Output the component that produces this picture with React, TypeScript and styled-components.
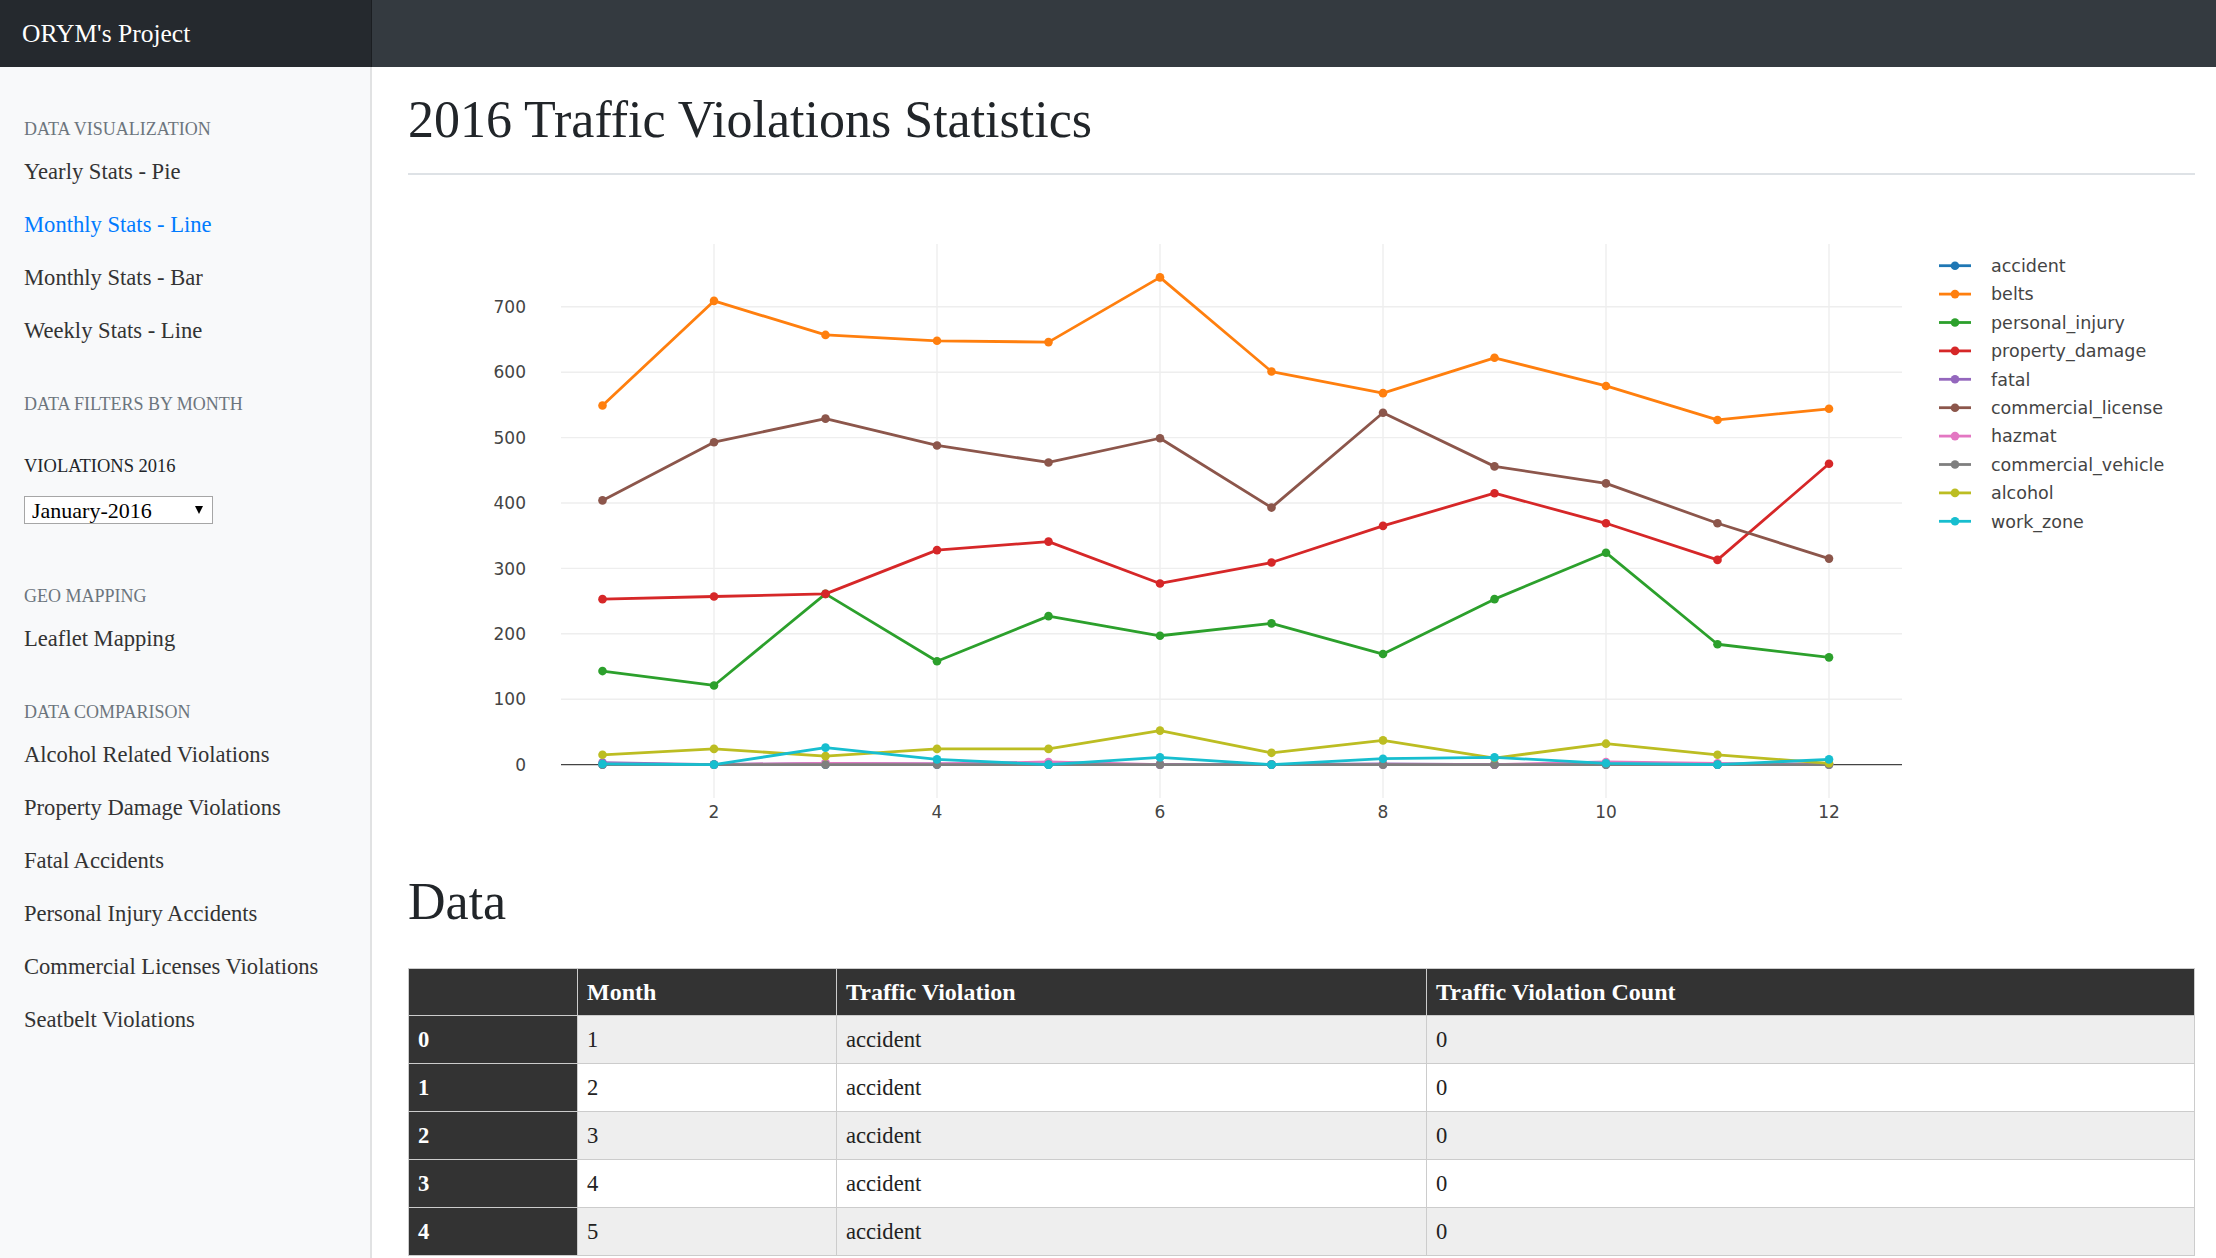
import React from "react";
import styled, { createGlobalStyle } from "styled-components";

const GlobalStyle = createGlobalStyle`
  * { box-sizing: border-box; }
  html, body { margin: 0; padding: 0; background: #fff; }
  body {
    font-family: "Liberation Serif", "Times New Roman", serif;
    color: #212529;
  }
`;

const Navbar = styled.header`
  display: flex;
  height: 67px;
  background: #343a40;
`;

const Brand = styled.div`
  width: 372px;
  flex: none;
  display: flex;
  align-items: center;
  padding-left: 22px;
  background: rgba(0, 0, 0, 0.28);
  box-shadow: inset -1px 0 0 rgba(0, 0, 0, 0.25);
  color: #fff;
  font-size: 25.5px;
`;

const Layout = styled.div`
  display: flex;
  align-items: stretch;
  min-height: 1191px;
`;

const Sidebar = styled.nav`
  width: 372px;
  flex: none;
  background: #f8f9fa;
  box-shadow: inset -2px 0 0 rgba(0, 0, 0, 0.09);
  padding-top: 50px;
`;

const SideHeading = styled.div<{ $mt?: number }>`
  margin-top: ${(p) => p.$mt ?? 0}px;
  margin-bottom: 4px;
  padding: 0 24px;
  font-size: 18px;
  line-height: 24px;
  color: #6c757d;
  text-transform: uppercase;
`;

const NavItem = styled.a<{ $active?: boolean }>`
  display: block;
  padding: 0 24px;
  font-size: 22.6px;
  line-height: 53px;
  height: 53px;
  color: ${(p) => (p.$active ? "#007bff" : "#333")};
  text-decoration: none;
  white-space: nowrap;
`;

const FilterLabel = styled.div`
  margin-top: 38px;
  padding: 0 24px;
  font-size: 18.5px;
  line-height: 24px;
  color: #212529;
`;

const SelectWrap = styled.div`
  position: relative;
  margin: 18px 0 0 24px;
  width: 189px;
  height: 28px;
`;

const Select = styled.select`
  appearance: none;
  -webkit-appearance: none;
  width: 100%;
  height: 100%;
  margin: 0;
  border: 1px solid #a6a6a6;
  border-radius: 0;
  background: #fff;
  color: #000;
  font-family: "Liberation Serif", "Times New Roman", serif;
  font-size: 22px;
  padding: 0 0 0 7px;
  outline: none;
`;

const Caret = styled.span`
  position: absolute;
  right: 10px;
  top: 10px;
  width: 0;
  height: 0;
  border-left: 4px solid transparent;
  border-right: 4px solid transparent;
  border-top: 8px solid #000;
  pointer-events: none;
`;

const Main = styled.main`
  flex: 1;
  min-width: 0;
  padding: 22px 21px 0 36px;
`;

const PageTitle = styled.h1<{ $divider?: boolean; $mt?: number }>`
  margin: ${(p) => p.$mt ?? 0}px 0 0 0;
  font-size: 52px;
  font-weight: 400;
  line-height: 62px;
  color: #212529;
  padding-bottom: ${(p) => (p.$divider ? 22 : 0)}px;
  border-bottom: ${(p) => (p.$divider ? "2px solid #dee2e6" : "none")};
`;

const ChartFrame = styled.div`
  height: 690px;
  svg {
    display: block;
    width: 100%;
    height: 100%;
    font-family: "DejaVu Sans", Verdana, sans-serif;
  }
`;

const DataTable = styled.table`
  margin-top: 35px;
  width: 100%;
  border-collapse: collapse;
  table-layout: fixed;
  font-size: 22.6px;
  color: #222;
`;

const HeadCell = styled.th`
  height: 47px;
  padding: 0 9px;
  text-align: left;
  background: #333;
  color: #fff;
  font-weight: 700;
  font-size: 24px;
  border: 1px solid #ccc;
`;

const IndexCell = styled.th`
  height: 48px;
  padding: 0 9px;
  text-align: left;
  background: #333;
  color: #fff;
  font-weight: 700;
  border: 1px solid #ccc;
`;

const Cell = styled.td<{ $shade?: boolean }>`
  height: 48px;
  padding: 0 9px;
  background: ${(p) => (p.$shade ? "#eee" : "#fff")};
  border: 1px solid #ccc;
`;

type Series = { name: string; color: string; data: number[] };

const SERIES: Series[] = [
  { name: "accident", color: "#1f77b4", data: [0, 0, 0, 0, 0, 0, 0, 0, 0, 0, 0, 0] },
  { name: "belts", color: "#ff7f0e", data: [549, 709, 657, 648, 646, 745, 601, 568, 622, 579, 527, 544] },
  { name: "personal_injury", color: "#2ca02c", data: [143, 121, 261, 158, 227, 197, 216, 169, 253, 324, 184, 164] },
  { name: "property_damage", color: "#d62728", data: [253, 257, 261, 328, 341, 277, 309, 365, 415, 369, 313, 460] },
  { name: "fatal", color: "#9467bd", data: [3, 0, 2, 1, 1, 0, 0, 1, 0, 1, 0, 1] },
  { name: "commercial_license", color: "#8c564b", data: [404, 493, 529, 488, 462, 499, 393, 538, 456, 430, 369, 315] },
  { name: "hazmat", color: "#e377c2", data: [1, 0, 2, 1, 4, 0, 0, 0, 0, 4, 2, 0] },
  { name: "commercial_vehicle", color: "#7f7f7f", data: [0, 0, 0, 0, 0, 0, 0, 0, 0, 0, 0, 0] },
  { name: "alcohol", color: "#bcbd22", data: [15, 24, 13, 24, 24, 52, 18, 37, 10, 32, 15, 2] },
  { name: "work_zone", color: "#17becf", data: [1, 0, 26, 8, 0, 11, 0, 9, 11, 2, 0, 8] },
];

const X0 = 194.5;
const DX = 111.5;
const Y0 = 589.6;
const DY = 0.654;
const PLOT_L = 153;
const PLOT_R = 1494;
const PLOT_T = 69;
const PLOT_B = 623;
const px = (m: number) => X0 + (m - 1) * DX;
const py = (v: number) => Y0 - v * DY;

const LineChart: React.FC = () => {
  const yTicks = [0, 100, 200, 300, 400, 500, 600, 700];
  const xTicks = [2, 4, 6, 8, 10, 12];
  return (
    <ChartFrame>
      <svg viewBox="0 0 1787 690" preserveAspectRatio="xMinYMin meet">
        {xTicks.map((t) => (
          <line key={`vx${t}`} x1={px(t)} x2={px(t)} y1={PLOT_T} y2={PLOT_B} stroke="#eee" strokeWidth={1.4} />
        ))}
        {yTicks.slice(1).map((t) => (
          <line key={`hy${t}`} x1={PLOT_L} x2={PLOT_R} y1={py(t)} y2={py(t)} stroke="#eee" strokeWidth={1.4} />
        ))}
        <line x1={PLOT_L} x2={PLOT_R} y1={py(0)} y2={py(0)} stroke="#444" strokeWidth={1.4} />
        {yTicks.map((t) => (
          <text key={`ty${t}`} x={118} y={py(t)} dy="0.36em" textAnchor="end" fontSize={17} fill="#444">
            {t}
          </text>
        ))}
        {xTicks.map((t) => (
          <text key={`tx${t}`} x={px(t)} y={637} dy="0.36em" textAnchor="middle" fontSize={17} fill="#444">
            {t}
          </text>
        ))}
        {SERIES.map((s) => (
          <g key={s.name}>
            <polyline
              points={s.data.map((v, i) => `${px(i + 1)},${py(v)}`).join(" ")}
              fill="none"
              stroke={s.color}
              strokeWidth={2.8}
              strokeLinejoin="round"
            />
            {s.data.map((v, i) => (
              <circle key={i} cx={px(i + 1)} cy={py(v)} r={4.3} fill={s.color} />
            ))}
          </g>
        ))}
        {SERIES.map((s, i) => {
          const y = 90.7 + i * 28.4;
          return (
            <g key={`lg${s.name}`}>
              <line x1={1531} x2={1563} y1={y} y2={y} stroke={s.color} strokeWidth={2.8} />
              <circle cx={1547} cy={y} r={4.3} fill={s.color} />
              <text x={1583} y={y} dy="0.36em" fontSize={17.5} fill="#444">
                {s.name}
              </text>
            </g>
          );
        })}
      </svg>
    </ChartFrame>
  );
};

const ROWS = Array.from({ length: 5 }, (_, i) => ({ month: i + 1, violation: "accident", count: 0 }));

const App: React.FC = () => (
  <>
    <GlobalStyle />
    <Navbar>
      <Brand>ORYM's Project</Brand>
    </Navbar>
    <Layout>
      <Sidebar>
        <SideHeading>Data Visualization</SideHeading>
        <NavItem href="#">Yearly Stats - Pie</NavItem>
        <NavItem href="#" $active>
          Monthly Stats - Line
        </NavItem>
        <NavItem href="#">Monthly Stats - Bar</NavItem>
        <NavItem href="#">Weekly Stats - Line</NavItem>

        <SideHeading $mt={35}>Data Filters by Month</SideHeading>
        <FilterLabel>VIOLATIONS 2016</FilterLabel>
        <SelectWrap>
          <Select defaultValue="January-2016">
            <option>January-2016</option>
            <option>February-2016</option>
            <option>March-2016</option>
          </Select>
          <Caret />
        </SelectWrap>

        <SideHeading $mt={60}>Geo Mapping</SideHeading>
        <NavItem href="#">Leaflet Mapping</NavItem>

        <SideHeading $mt={35}>Data Comparison</SideHeading>
        <NavItem href="#">Alcohol Related Violations</NavItem>
        <NavItem href="#">Property Damage Violations</NavItem>
        <NavItem href="#">Fatal Accidents</NavItem>
        <NavItem href="#">Personal Injury Accidents</NavItem>
        <NavItem href="#">Commercial Licenses Violations</NavItem>
        <NavItem href="#">Seatbelt Violations</NavItem>
      </Sidebar>
      <Main>
        <PageTitle $divider>2016 Traffic Violations Statistics</PageTitle>
        <LineChart />
        <PageTitle $mt={6}>Data</PageTitle>
        <DataTable>
          <colgroup>
            <col style={{ width: 169 }} />
            <col style={{ width: 259 }} />
            <col style={{ width: 590 }} />
            <col />
          </colgroup>
          <thead>
            <tr>
              <HeadCell />
              <HeadCell>Month</HeadCell>
              <HeadCell>Traffic Violation</HeadCell>
              <HeadCell>Traffic Violation Count</HeadCell>
            </tr>
          </thead>
          <tbody>
            {ROWS.map((r, i) => (
              <tr key={i}>
                <IndexCell>{i}</IndexCell>
                <Cell $shade={i % 2 === 0}>{r.month}</Cell>
                <Cell $shade={i % 2 === 0}>{r.violation}</Cell>
                <Cell $shade={i % 2 === 0}>{r.count}</Cell>
              </tr>
            ))}
          </tbody>
        </DataTable>
      </Main>
    </Layout>
  </>
);

export default App;
